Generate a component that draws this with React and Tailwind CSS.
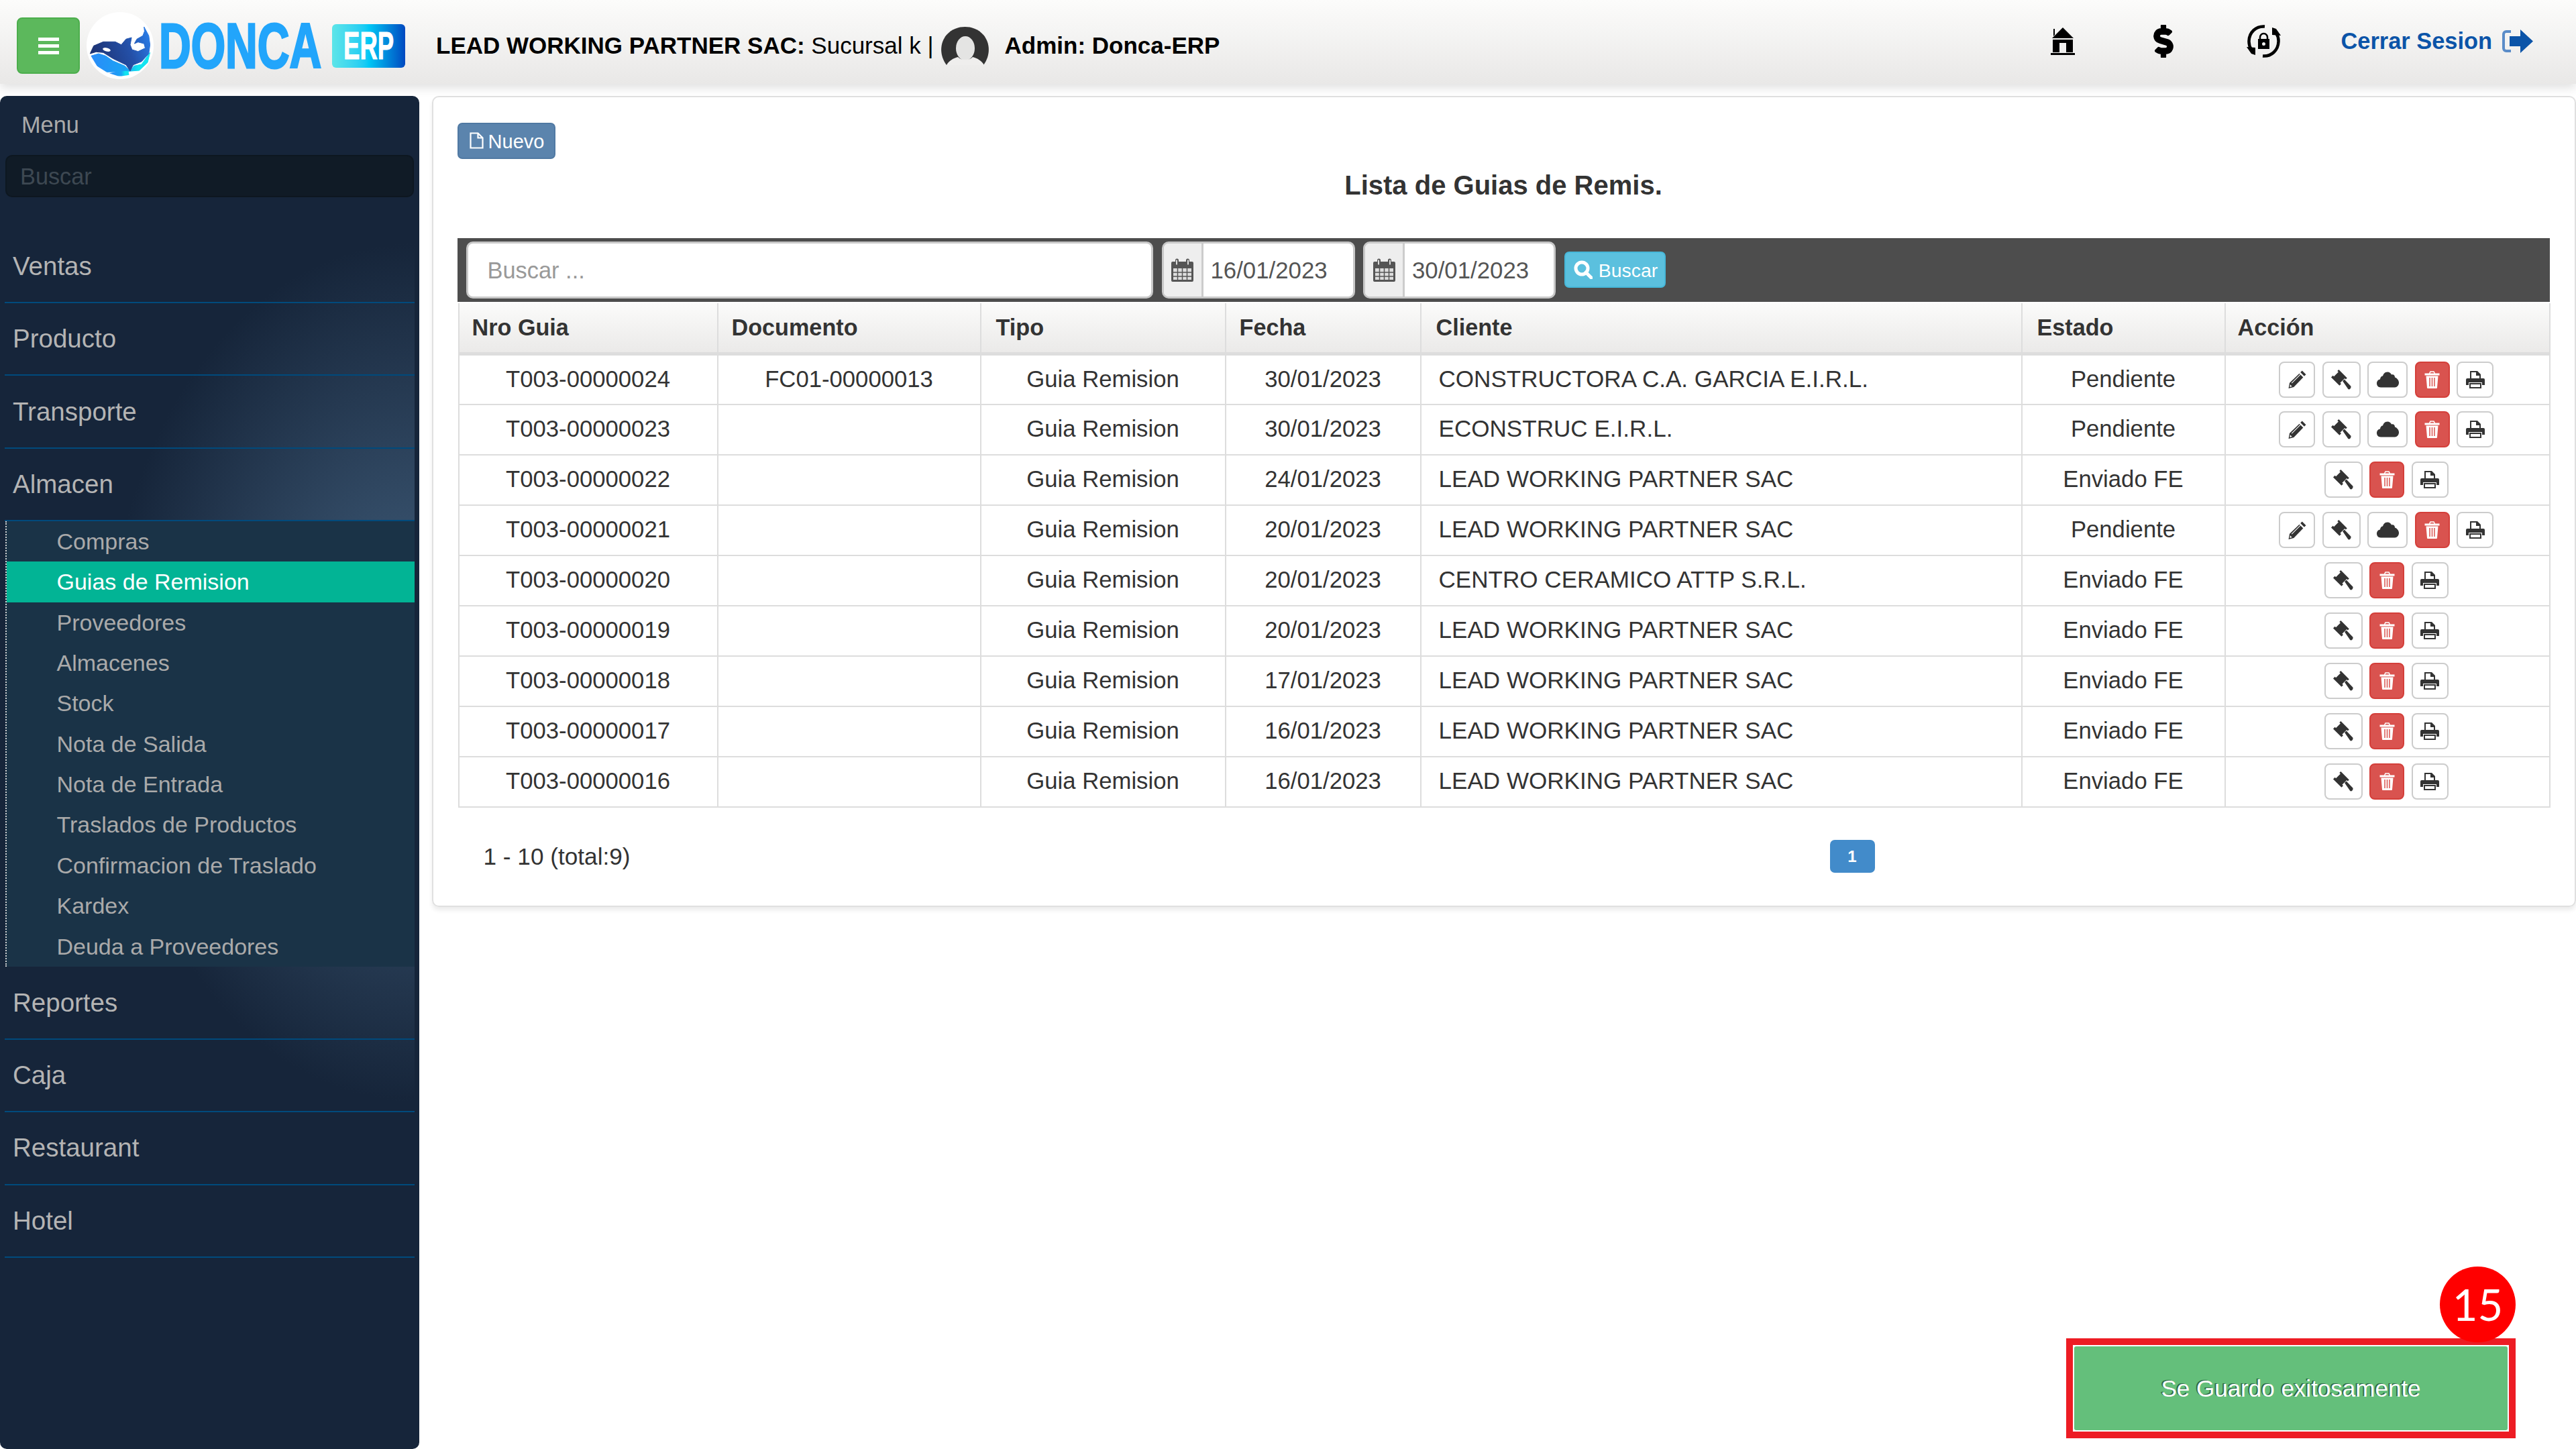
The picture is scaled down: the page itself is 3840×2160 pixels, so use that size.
import React from "react";
import { FaDollarSign } from "react-icons/fa";

const navTop = ["Ventas", "Producto", "Transporte", "Almacen"];
const navBottom = ["Reportes", "Caja", "Restaurant", "Hotel"];
const subItems = [
  "Compras",
  "Guias de Remision",
  "Proveedores",
  "Almacenes",
  "Stock",
  "Nota de Salida",
  "Nota de Entrada",
  "Traslados de Productos",
  "Confirmacion de Traslado",
  "Kardex",
  "Deuda a Proveedores",
];

const rows = [
  ["T003-00000024", "FC01-00000013", "30/01/2023", "CONSTRUCTORA C.A. GARCIA E.I.R.L.", "Pendiente"],
  ["T003-00000023", "", "30/01/2023", "ECONSTRUC E.I.R.L.", "Pendiente"],
  ["T003-00000022", "", "24/01/2023", "LEAD WORKING PARTNER SAC", "Enviado FE"],
  ["T003-00000021", "", "20/01/2023", "LEAD WORKING PARTNER SAC", "Pendiente"],
  ["T003-00000020", "", "20/01/2023", "CENTRO CERAMICO ATTP S.R.L.", "Enviado FE"],
  ["T003-00000019", "", "20/01/2023", "LEAD WORKING PARTNER SAC", "Enviado FE"],
  ["T003-00000018", "", "17/01/2023", "LEAD WORKING PARTNER SAC", "Enviado FE"],
  ["T003-00000017", "", "16/01/2023", "LEAD WORKING PARTNER SAC", "Enviado FE"],
  ["T003-00000016", "", "16/01/2023", "LEAD WORKING PARTNER SAC", "Enviado FE"],
];

const PencilIcon = () => (
  <svg viewBox="0 0 26 26" className="w-[27px] h-[27px]" fill="#333">
    <path d="M20 .5l5.500 5.500-2.500 2.500L17.500 3z" />
    <path d="M16 4.500l5.500 5.500L8 24 .5 26 2 18z" />
    <path d="M2.800 20.500l2.700 2.700-3.300.8z" fill="#fff" />
    <path d="M5 18.500L17.500 6" stroke="#fff" strokeWidth="1" />
  </svg>
);

const GavelIcon = () => (
  <svg viewBox="0 0 29 29" className="w-[30px] h-[30px]" fill="#333">
    <path d="M11 0l12 12-2 2-1.500-1.500L13 19l1.500 1.500L12 23 0 11l2.500-2.500L4 10l6.500-6.500L9 2z" />
    <path d="M16.500 16.500L19 14l9.500 10q.5 2-1 3.500t-3 .5z" />
  </svg>
);

const CloudIcon = () => (
  <svg viewBox="0 0 33 23" className="w-[33px] h-[24px]" fill="#333">
    <path d="M6 23C2 23 0 20 0 17c0-4 3-6 5-6 0-3 2-5 4-5 1-4 4-6 7-6s5 2 6 4c3-1 5 1 5 4 3 1 6 4 6 8s-3 7-6 7z" />
  </svg>
);

const TrashIcon = () => (
  <svg viewBox="0 0 23 26" className="w-[23px] h-[26px]" fill="#fff">
    <path d="M7.500 4L9 1h5l1.500 3" fill="none" stroke="#fff" strokeWidth="1.600" />
    <path d="M.5 3.500h22v3H.5z" />
    <path d="M2.500 7.500h18L19 25a1 1 0 0 1-1 1H5a1 1 0 0 1-1-1z" />
    <path d="M8 10v13M11.500 10v13M15 10v13" stroke="#d9534f" strokeWidth="1.500" />
  </svg>
);

const PrintIcon = () => (
  <svg viewBox="0 0 28 26" className="w-[28px] h-[26px]" fill="#333">
    <path d="M6 0h11l5 5v6h-2V7h-5V2H8v9H6z" />
    <path d="M2 11h24a2 2 0 0 1 2 2v8h-4v-4H4v4H0v-8a2 2 0 0 1 2-2z" />
    <path fillRule="evenodd" d="M5 18h18v8H5zm2 2v4h14v-4z" />
  </svg>
);

const CalendarIcon = () => (
  <svg viewBox="0 0 33 35" className="w-[33px] h-[35px]" fill="#555">
    <path fillRule="evenodd" d="M2 5h4V3a2.500 2.500 0 0 1 5 0v2h11V3a2.500 2.500 0 0 1 5 0v2h4a2 2 0 0 1 2 2v26a2 2 0 0 1-2 2H2a2 2 0 0 1-2-2V7a2 2 0 0 1 2-2zm1 10v17h27V15z" />
    <path d="M7 2.500h2v7H7zM24 2.500h2v7h-2zM3 15h27v17H3z" fill="#ddd" />
    <path d="M9.500 15v17M16.500 15v17M23.500 15v17M3 21h27M3 27h27" stroke="#555" strokeWidth="1.500" />
  </svg>
);

const HomeIcon = () => (
  <svg viewBox="0 0 36 41" className="w-[36px] h-[41px]" fill="#000">
    <path d="M18 0l16 16H2zM4 2h2v9L4 13z" />
    <path fillRule="evenodd" d="M3 18h30v19H3zm10 5v14h10V23z" />
    <path d="M0 38h36v3H0z" />
  </svg>
);

const CycleLockIcon = () => (
  <svg viewBox="0 0 51 49" className="w-[51px] h-[49px]">
    <path d="M27 2.500C14 1.500 4 11 3.500 24c-.2 5 1 9 3.500 13" fill="none" stroke="#000" strokeWidth="4.500" />
    <path d="M24 46.500C37 47.500 47 38 47.500 25c.2-5-1-9-3.500-13" fill="none" stroke="#000" strokeWidth="4.500" />
    <path d="M0 33l13 1 0 11-6-2z" fill="#000" />
    <path d="M51 16l-13-1 0-11 6 2z" fill="#000" />
    <path d="M20 22v-3.500a5.500 5.500 0 0 1 11 0V22" fill="none" stroke="#000" strokeWidth="2.500" />
    <path fillRule="evenodd" d="M17 21h17v15H17zm8.500 5a2.500 2.500 0 1 0 0 5 2.500 2.500 0 0 0 0-5z" fill="#000" />
  </svg>
);

const LogoutIcon = () => (
  <svg viewBox="0 0 46 35" className="w-[46px] h-[35px]" fill="#0b54a8">
    <path d="M13 3H6a4 4 0 0 0-4 4v21a4 4 0 0 0 4 4h7" fill="none" stroke="#5a8cc8" strokeWidth="4" />
    <path d="M27 0l19 17.500L27 35V25H11V10h16z" />
  </svg>
);

const SearchIcon = () => (
  <svg viewBox="0 0 28 28" className="w-[28px] h-[28px]" fill="none" stroke="#fff">
    <circle cx="12" cy="12" r="9" strokeWidth="5" />
    <path d="M18 18l8 8" strokeWidth="5" strokeLinecap="round" />
  </svg>
);

const FileIcon = () => (
  <svg viewBox="0 0 21 25" className="w-[21px] h-[25px]" fill="none" stroke="#fff" strokeWidth="2.200">
    <path d="M1.500 1.500h11l7 7v15h-18z" />
    <path d="M12.500 1.500v7h7" />
  </svg>
);

const WhaleLogo = () => (
  <svg viewBox="0 0 100 100" className="w-[100px] h-[100px] shrink-0">
    <defs>
      <linearGradient id="whaleBody" x1="0" y1="0.5" x2="1" y2="0.2">
        <stop offset="0" stopColor="#1d3272" />
        <stop offset="0.6" stopColor="#2450a8" />
        <stop offset="1" stopColor="#2a7de8" />
      </linearGradient>
      <linearGradient id="whaleWater" x1="0" y1="0" x2="1" y2="0">
        <stop offset="0" stopColor="#2a8cf8" />
        <stop offset="0.6" stopColor="#1aa4f4" />
        <stop offset="0.8" stopColor="#12e4f0" />
      </linearGradient>
    </defs>
    <ellipse cx="50" cy="50" rx="50" ry="50" fill="#fff" />
    <path
      d="M7 65.300L17.800 62 28.500 65.300 39.300 72.700 57 80.300 65 88 70.700 80.300 82 78 94.600 60.300 91 75.300 78.500 87 57 88.700 30.300 89.300 16 80.300Z"
      fill="url(#whaleWater)"
      stroke="url(#whaleWater)"
      strokeLinejoin="round"
    />
    <path d="M34 91.300Q48 87 62.500 88L63.500 93.700Q52 96 46.400 95.300Z" fill="url(#whaleWater)" />
    <path
      d="M5.300 62L10.700 50.300 25 44.300 42.800 44.300 51.800 48.700 58.900 40.300 67.100 38 65 48.700 67.800 56 76.800 58.700 87.500 53.700 85.700 47 76.800 44.700 71.400 47 75 40.300 83.900 35.300 86.400 28.700 85.700 22 92.800 35.300 94.600 48.700 92.800 62 82.100 73.700 69.600 78.700 65 88 58.900 78.700 39.300 69.300 25 60.300 14.300 59.300Z"
      fill="url(#whaleBody)"
      stroke="url(#whaleBody)"
      strokeLinejoin="round"
    />
    <ellipse cx="30" cy="56" rx="6" ry="2.600" transform="rotate(15 30 56)" fill="#fff" />
  </svg>
);

const ActionButton = ({ w, danger, children }) => (
  <span
    style={{ width: w }}
    className={
      danger
        ? "flex h-[54px] items-center justify-center rounded-[8px] border-[2.5px] border-[#d43f3a] bg-[#d9534f]"
        : "flex h-[54px] items-center justify-center rounded-[8px] border-[2.5px] border-[#ccc] bg-white"
    }
  >
    {children}
  </span>
);

const Actions = ({ full }) => (
  <div className="flex items-center justify-center gap-[10.5px] pr-[3px]">
    {full && (
      <ActionButton w={54}>
        <PencilIcon />
      </ActionButton>
    )}
    <ActionButton w={57}>
      <GavelIcon />
    </ActionButton>
    {full && (
      <ActionButton w={60}>
        <CloudIcon />
      </ActionButton>
    )}
    <ActionButton w={52} danger>
      <TrashIcon />
    </ActionButton>
    <ActionButton w={55}>
      <PrintIcon />
    </ActionButton>
  </div>
);

const NavItem = ({ label }) => (
  <div className="flex h-[108.4px] items-center border-b-[2.5px] border-[#004a7c] pl-[12px] text-[38.5px] text-[#b4b4b4]">
    {label}
  </div>
);

const DateBox = ({ value, className }) => (
  <div className={"flex h-[85px] items-stretch overflow-hidden rounded-[10px] border-[3px] border-[#c8c8c8] bg-white " + className}>
    <div className="flex w-[59px] items-center justify-center border-r-[3px] border-[#ccc] bg-[#eee]">
      <CalendarIcon />
    </div>
    <div className="flex items-center pl-[11px] pt-[2px] text-[34.8px] text-[#555]">{value}</div>
  </div>
);

const headers = [
  { label: "Nro Guia", pad: "pl-[19px]" },
  { label: "Documento", pad: "pl-[20px]" },
  { label: "Tipo", pad: "pl-[22px]" },
  { label: "Fecha", pad: "pl-[20px]" },
  { label: "Cliente", pad: "pl-[22px]" },
  { label: "Estado", pad: "pl-[22px]" },
  { label: "Acción", pad: "pl-[18px]" },
];

export default function App() {
  return (
    <div className="relative flex h-[2160px] w-[3840px] flex-col overflow-hidden bg-white font-['Liberation_Sans',Arial,sans-serif] text-[#333]">
      <header className="z-10 flex h-[125px] shrink-0 items-center bg-gradient-to-b from-[#fcfcfb] to-[#e9e8e7] pl-[25px] pr-[64px] pt-[11px] shadow-[0_6px_14px_rgba(0,0,0,0.12)]">
        <button className="flex h-[84px] w-[94px] flex-col items-center justify-center gap-[5px] rounded-[8px] border-2 border-[#4cae4c] bg-[#5cb85c]">
          <span className="h-[5px] w-[31px] bg-white" />
          <span className="h-[5px] w-[31px] bg-white" />
          <span className="h-[5px] w-[31px] bg-white" />
        </button>
        <div className="ml-[10px]">
          <WhaleLogo />
        </div>
        <div className="ml-[8px] w-[243px] shrink-0">
          <span className="inline-block origin-left scale-x-[0.695] text-[95px] font-bold leading-[95px] text-[#22a5fb] [-webkit-text-stroke:3px_#22a5fb]">
            DONCA
          </span>
        </div>
        <div className="ml-[15px] flex h-[65px] w-[109px] shrink-0 items-center justify-center rounded-[6px] bg-gradient-to-r from-[#5ce5e8] via-[#00c8f5] to-[#0048c0]">
          <span className="scale-x-[0.63] text-[58px] font-bold leading-none text-white [-webkit-text-stroke:1px_#fff]">ERP</span>
        </div>
        <div className="ml-[46px] flex items-center text-[35px] text-black">
          <span>
            <b>LEAD WORKING PARTNER SAC:</b> Sucursal k |
          </span>
          <svg viewBox="0 0 71 57" className="ml-[11px] h-[57px] w-[71px]">
            <path d="M8 57C-3 42-2 24 8 12 16 3 26 0 35.500 0S55 3 63 12c10 12 11 30 0 45z" fill="#333" />
            <ellipse cx="36" cy="32" rx="14" ry="18" fill="#e4e4e3" />
            <path d="M8 57c4-7 10-10 17-12 3 3 7 4 11 4s8-1 11-4c7 2 13 5 17 12z" fill="#efeeed" />
          </svg>
          <b className="ml-[24px]">Admin: Donca-ERP</b>
        </div>
        <div className="mb-[12px] ml-auto flex items-center">
          <HomeIcon />
          <FaDollarSign strokeWidth={22} className="ml-[116px] h-[49px] w-[32px] text-black" />
          <div className="ml-[108px]">
            <CycleLockIcon />
          </div>
          <span className="ml-[89px] text-[34.4px] font-bold text-[#0b54a8]">Cerrar Sesion</span>
          <div className="ml-[15px]">
            <LogoutIcon />
          </div>
        </div>
      </header>

      <div className="flex flex-1 pt-[18px]">
        <aside className="h-[2017px] w-[625px] shrink-0 rounded-[10px] bg-[#16253a]">
          <div className="flex h-[88px] items-center pl-[32px] text-[34.3px] text-[#aaa]">Menu</div>
          <input
            placeholder="Buscar"
            className="mx-[8px] block h-[63px] w-[609px] rounded-[10px] border-2 border-[#0d1720] bg-[#101b26] pl-[20px] pt-[2px] text-[34.3px] placeholder:text-[#3d4852]"
          />
          <nav className="mt-[49.5px] w-[618px] bg-[radial-gradient(ellipse_460px_640px_at_618px_658px,#446280,#16253a)] pl-[7px]">
            {navTop.map((label) => (
              <NavItem key={label} label={label} />
            ))}
            <ul className="ml-px border-l-2 border-dotted border-[#d0d0d0] bg-[#1a3347]">
              {subItems.map((label) => (
                <li
                  key={label}
                  className={
                    label === "Guias de Remision"
                      ? "flex h-[60.4px] items-center bg-[#02b495] pl-[74.5px] text-[34px] text-white"
                      : "flex h-[60.4px] items-center pl-[74.5px] text-[34px] text-[#aaa]"
                  }
                >
                  {label}
                </li>
              ))}
            </ul>
            {navBottom.map((label) => (
              <NavItem key={label} label={label} />
            ))}
          </nav>
        </aside>

        <main className="ml-[19px] h-[1209px] flex-1 rounded-[10px] border-[2.5px] border-[#e0e0e0] pl-[35.5px] pt-[37.5px] shadow-[0_5px_6px_rgba(0,0,0,0.08)]">
          <div className="flex h-[54px] w-[146px] items-center justify-center gap-[7px] rounded-[7px] border-2 border-[#5079a3] bg-[#5b84ad] pl-[2px] text-[29px] text-white">
            <FileIcon />
            <span className="mt-[4px]">Nuevo</span>
          </div>
          <h1 className="mt-[15px] mb-[55px] flex h-[48px] w-[3119px] items-center justify-center text-[40px] font-bold text-[#333]">
            Lista de Guias de Remis.
          </h1>

          <div className="flex h-[95px] w-[3119px] items-center bg-[#4d4d4d] pl-[13px]">
            <input
              placeholder="Buscar ..."
              className="h-[85px] w-[1024px] rounded-[10px] border-[3px] border-[#c8c8c8] bg-white pl-[29px] pt-[2px] text-[34.4px] placeholder:text-[#999]"
            />
            <DateBox value="16/01/2023" className="ml-[13px] w-[288px]" />
            <DateBox value="30/01/2023" className="ml-[12.5px] w-[287px]" />
            <button className="ml-[13px] flex h-[54px] w-[151px] items-center justify-center gap-[9px] rounded-[7px] border-2 border-[#46b8da] bg-[#5bc0de] pl-[2px] text-[28.4px] text-white">
              <SearchIcon />
              <span className="mt-[3px]">Buscar</span>
            </button>
          </div>

          <table className="mt-[2px] ml-px w-[3117px] table-fixed border-collapse text-[34.7px]">
            <colgroup>
              <col className="w-[386px]" />
              <col className="w-[392px]" />
              <col className="w-[365px]" />
              <col className="w-[291px]" />
              <col className="w-[896px]" />
              <col className="w-[303px]" />
              <col className="w-[484px]" />
            </colgroup>
            <thead>
              <tr className="h-[76px] bg-gradient-to-b from-[#fbfbfa] to-[#eae9e8]">
                {headers.map((h) => (
                  <th key={h.label} className={"border-x-2 border-b-[5px] border-[#ddd] text-left text-[34.2px] font-bold " + h.pad}>
                    {h.label}
                  </th>
                ))}
              </tr>
            </thead>
            <tbody>
              {rows.map((r) => (
                <tr key={r[0]} className="h-[75px] border-b-[2.5px] border-[#ddd]">
                  <td className="border-x-2 border-[#ddd] pb-[1px] text-center">{r[0]}</td>
                  <td className="border-x-2 border-[#ddd] pb-[1px] text-center">{r[1]}</td>
                  <td className="border-x-2 border-[#ddd] pb-[1px] text-center">Guia Remision</td>
                  <td className="border-x-2 border-[#ddd] pb-[1px] text-center">{r[2]}</td>
                  <td className="border-x-2 border-[#ddd] pb-[1px] pl-[26px] text-[35.1px]">{r[3]}</td>
                  <td className="border-x-2 border-[#ddd] pb-[1px] text-center">{r[4]}</td>
                  <td className="border-x-2 border-[#ddd]">
                    <Actions full={r[4] === "Pendiente"} />
                  </td>
                </tr>
              ))}
            </tbody>
          </table>

          <div className="mt-[47px] flex items-center text-[35.2px]">
            <span className="w-[2046px] pl-[39px]">1 - 10 (total:9)</span>
            <span className="flex h-[49px] w-[67px] items-center justify-center rounded-[7px] bg-[#428bca] text-[24px] font-bold text-white">
              1
            </span>
          </div>
        </main>
      </div>

      <div className="absolute left-[3080px] top-[1995px] h-[149px] w-[670px] border-[10px] border-[#ed1c24] bg-white p-[2px]">
        <div className="flex h-full items-center justify-center rounded-[3px] bg-[#64bf7b] pt-[1px] text-[35px] text-white [text-shadow:-2px_-1px_0_#2f6b45]">
          Se Guardo exitosamente
        </div>
      </div>
      <div className="absolute left-[3637px] top-[1888px] flex h-[113px] w-[113px] items-center justify-center rounded-full bg-[#ff0000] font-['Lato',sans-serif] text-[65px] text-white">
        15
      </div>
    </div>
  );
}
